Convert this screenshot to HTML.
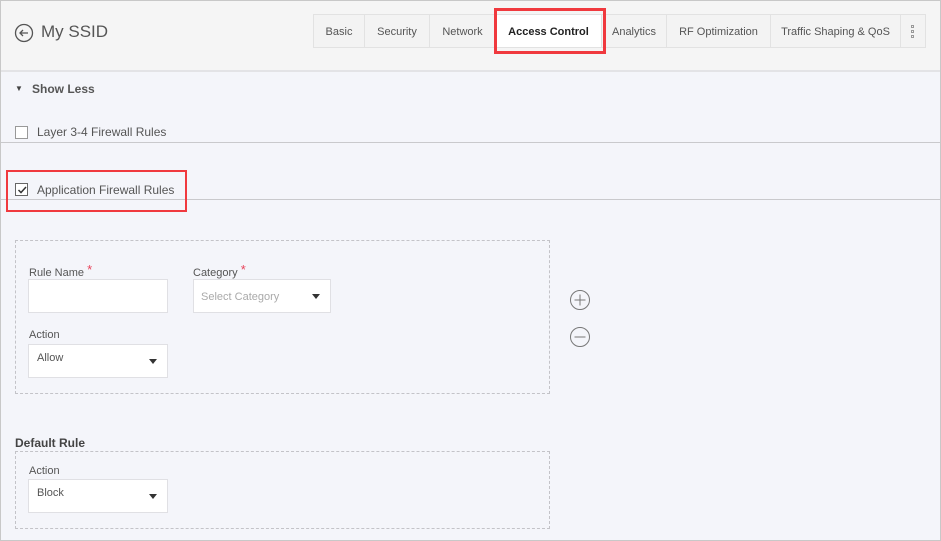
<!DOCTYPE html><html><head><style>
body{margin:0;width:941px;height:541px;overflow:hidden;font-family:"Liberation Sans",sans-serif;background:#f4f5fa;position:relative;color:#555}
.a{position:absolute}
.page{position:absolute;left:0;top:0;width:939px;height:539px;border:1px solid #c8c8c8;background:#f4f5fa}
.in{position:absolute;left:-1px;top:-1px;width:941px;height:541px}
.hdr{position:absolute;left:1px;top:1px;width:939px;height:69px;background:#f5f5f5;border-bottom:2px solid #e3e3e6}
.tab{position:absolute;top:14px;height:34px;line-height:34px;font-size:11px;color:#555;text-align:center;background:#f3f3f3;border:1px solid #e2e2e2;box-sizing:border-box}
.hl{position:absolute;left:1px;width:939px;height:1px;background:#c9c9cc}
.dash{position:absolute;border:1px dashed #c3c3c8;box-sizing:border-box}
.lbl{position:absolute;font-size:11px;color:#555}
.inp{position:absolute;background:#fff;border:1px solid #e0e0e4;box-sizing:border-box;font-size:11px;color:#555}
.car{position:absolute;right:10px;top:14px;width:0;height:0;border-left:4px solid transparent;border-right:4px solid transparent;border-top:5px solid #333}
.st{color:#e8435a;font-size:13px;position:relative;top:-2px}
.dot{position:absolute;left:10px;width:3px;height:3px;border:1px solid #999;box-sizing:border-box}
</style></head><body>
<div class="page"><div class="in">
<div class="hdr"></div>
<svg class="a" style="left:14px;top:23px" width="20" height="20" viewBox="0 0 20 20"><circle cx="10" cy="10" r="8.5" fill="none" stroke="#555" stroke-width="1.3"/><path d="M14 10H6M9 7L6 10L9 13" fill="none" stroke="#555" stroke-width="1.3"/></svg>
<div class="a" style="left:41px;top:22px;font-size:17px;color:#555">My SSID</div>
<div class="tab" style="left:313px;width:52px">Basic</div>
<div class="tab" style="left:364px;width:66px">Security</div>
<div class="tab" style="left:429px;width:67px">Network</div>
<div class="tab" style="left:495px;width:107px;background:#fff;color:#222;font-weight:bold">Access Control</div>
<div class="tab" style="left:601px;width:66px">Analytics</div>
<div class="tab" style="left:666px;width:105px">RF Optimization</div>
<div class="tab" style="left:770px;width:131px">Traffic Shaping &amp; QoS</div>
<div class="tab" style="left:900px;width:26px"><div class="dot" style="top:10px"></div><div class="dot" style="top:15px"></div><div class="dot" style="top:20px"></div></div>
<div class="a" style="left:494px;top:8px;width:106px;height:40px;border:3px solid #f0393e"></div>
<div class="a" style="left:15px;top:84px;font-size:8px;color:#444">▼</div>
<div class="a" style="left:32px;top:82px;font-size:12px;font-weight:bold;color:#555">Show Less</div>
<div class="a" style="left:15px;top:126px;width:11px;height:11px;border:1px solid #999;background:#fff"></div>
<div class="a" style="left:37px;top:125px;font-size:12px;color:#555">Layer 3-4 Firewall Rules</div>
<div class="hl" style="top:142px"></div>
<div class="a" style="left:15px;top:183px;width:11px;height:11px;border:1px solid #666;background:#fff"></div>
<svg class="a" style="left:16px;top:184px" width="12" height="12"><path d="M2.5 6L5 8.5L10 3" fill="none" stroke="#333" stroke-width="1.5"/></svg>
<div class="a" style="left:37px;top:183px;font-size:12px;color:#555">Application Firewall Rules</div>
<div class="hl" style="top:199px"></div>
<div class="a" style="left:6px;top:170px;width:177px;height:38px;border:2px solid #f0393e"></div>
<div class="dash" style="left:15px;top:240px;width:535px;height:154px"></div>
<div class="lbl" style="left:29px;top:264px">Rule Name <span class="st">*</span></div>
<div class="inp" style="left:28px;top:279px;width:140px;height:34px"></div>
<div class="lbl" style="left:193px;top:264px">Category <span class="st">*</span></div>
<div class="inp" style="left:193px;top:279px;width:138px;height:34px;color:#aaa;padding:11px 0 0 7px">Select Category<div class="car"></div></div>
<div class="lbl" style="left:29px;top:329px">Action</div>
<div class="inp" style="left:28px;top:344px;width:140px;height:34px;padding:7px 0 0 8px">Allow<div class="car"></div></div>
<svg class="a" style="left:569px;top:289px" width="22" height="58"><circle cx="11" cy="11" r="9.5" fill="none" stroke="#777"/><path d="M5.5 11h11M11 5.5v11" stroke="#777"/><circle cx="11" cy="48" r="9.5" fill="none" stroke="#777"/><path d="M5.5 48h11" stroke="#777"/></svg>
<div class="a" style="left:15px;top:436px;font-size:12px;font-weight:bold;color:#444">Default Rule</div>
<div class="dash" style="left:15px;top:451px;width:535px;height:78px"></div>
<div class="lbl" style="left:29px;top:465px">Action</div>
<div class="inp" style="left:28px;top:479px;width:140px;height:34px;padding:7px 0 0 8px">Block<div class="car"></div></div>
</div></div>
</body></html>
